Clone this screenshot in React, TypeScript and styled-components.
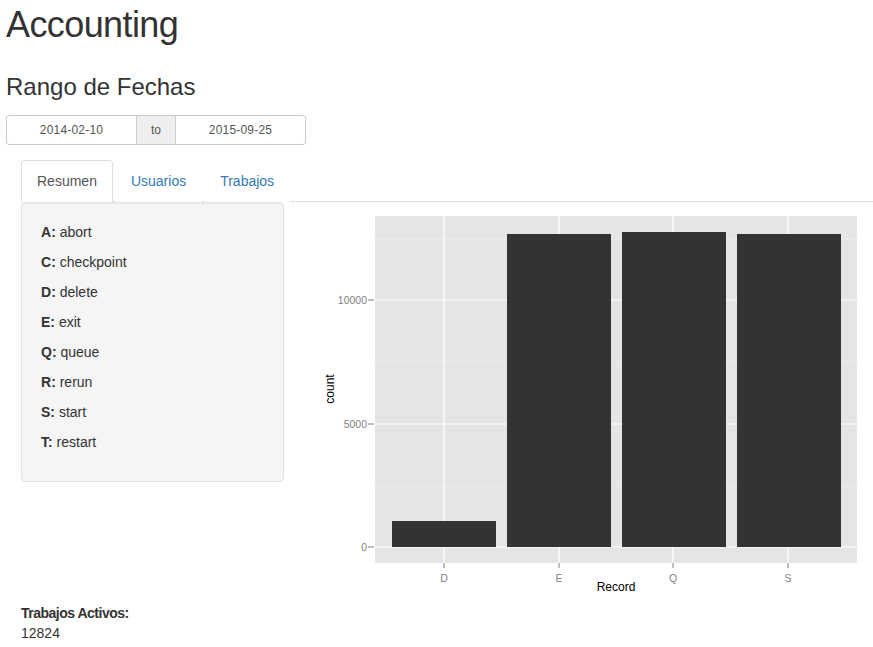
import React from "react";
import styled, { createGlobalStyle } from "styled-components";

const GlobalStyle = createGlobalStyle`
  html, body {
    margin: 0;
    padding: 0;
    background: #fff;
  }
  body {
    font-family: "Liberation Sans", Arial, sans-serif;
    font-size: 14px;
    line-height: 20px;
    color: #333;
    overflow: hidden;
  }
  * { box-sizing: border-box; }
`;

const legend = [
  ["A", "abort"],
  ["C", "checkpoint"],
  ["D", "delete"],
  ["E", "exit"],
  ["Q", "queue"],
  ["R", "rerun"],
  ["S", "start"],
  ["T", "restart"],
];

const bars = [
  { label: "D", x: 78, top: 318 },
  { label: "E", x: 193, top: 31 },
  { label: "Q", x: 308, top: 29 },
  { label: "S", x: 423, top: 31 },
];

export default function App() {
  return (
    <StyledPage>
      <GlobalStyle />
      <StyledTitle>Accounting</StyledTitle>
      <StyledSubtitle>Rango de Fechas</StyledSubtitle>
      <StyledDateRange>
        <StyledDateInput defaultValue="2014-02-10" />
        <StyledAddon>to</StyledAddon>
        <StyledDateInput defaultValue="2015-09-25" />
      </StyledDateRange>

      <StyledTabset>
        <StyledTabs>
          <StyledTab $active>Resumen</StyledTab>
          <StyledTab>Usuarios</StyledTab>
          <StyledTab>Trabajos</StyledTab>
        </StyledTabs>
        <StyledTabContent>
          <StyledWell>
            {legend.map(([k, v]) => (
              <p key={k}>
                <strong>{k}:</strong> {v}
              </p>
            ))}
          </StyledWell>
          <StyledPlot>
            <svg width="560" height="400" viewBox="0 0 560 400">
              <rect x="61" y="13" width="482" height="347" fill="#e5e5e5" />
              {[36, 159, 283].map((y) => (
                <line key={y} x1="61" x2="543" y1={y} y2={y} stroke="#f2f2f2" strokeWidth="0.6" />
              ))}
              {[97, 221, 344].map((y) => (
                <line key={y} x1="61" x2="543" y1={y} y2={y} stroke="#fff" strokeWidth="1.2" />
              ))}
              {[130, 245, 359, 474].map((x) => (
                <line key={x} x1={x} x2={x} y1="13" y2="360" stroke="#fff" strokeWidth="1.2" />
              ))}
              {bars.map((b) => (
                <rect key={b.label} x={b.x} y={b.top} width="104" height={344 - b.top} fill="#333" />
              ))}
              {[
                [97, "10000"],
                [221, "5000"],
                [344, "0"],
              ].map(([y, t]) => (
                <g key={t as string}>
                  <line x1="54" x2="60" y1={y} y2={y} stroke="#7f7f7f" />
                  <text x="53" y={(y as number) + 4} textAnchor="end" fontSize="10.5" fill="#7f7f7f" fontFamily="Liberation Sans, sans-serif">
                    {t}
                  </text>
                </g>
              ))}
              {[130, 245, 359, 474].map((x, i) => (
                <g key={x}>
                  <line x1={x} x2={x} y1="360" y2="365" stroke="#7f7f7f" />
                  <text x={x} y="379" textAnchor="middle" fontSize="10.5" fill="#7f7f7f" fontFamily="Liberation Sans, sans-serif">
                    {bars[i].label}
                  </text>
                </g>
              ))}
              <text x="302" y="388" textAnchor="middle" fontSize="12" fill="#000" fontFamily="Liberation Sans, sans-serif">
                Record
              </text>
              <text
                x="0"
                y="0"
                transform="translate(20 186) rotate(-90)"
                textAnchor="middle"
                fontSize="12"
                fill="#000"
                fontFamily="Liberation Sans, sans-serif"
              >
                count
              </text>
            </svg>
          </StyledPlot>
        </StyledTabContent>
      </StyledTabset>

      <StyledSummary>
        <label>Trabajos Activos:</label>
        <div>12824</div>
      </StyledSummary>
    </StyledPage>
  );
}

const StyledPage = styled.main`
  padding: 5px 0 0 6px;
`;

const StyledTitle = styled.h1`
  margin: 0;
  font-size: 36px;
  line-height: 40px;
  font-weight: 500;
  letter-spacing: -0.6px;
`;

const StyledSubtitle = styled.h3`
  margin: 29px 0 15px;
  font-size: 24px;
  line-height: 26px;
  font-weight: 500;
`;

const StyledDateRange = styled.div`
  display: flex;
  width: 300px;
  height: 30px;
`;

const StyledDateInput = styled.input`
  width: 131px;
  height: 30px;
  border: 1px solid #ccc;
  text-align: center;
  font-family: "Liberation Sans", Arial, sans-serif;
  font-size: 12px;
  letter-spacing: 0.2px;
  color: #555;
  padding: 0;
  outline: none;
  background: #fff;

  &:first-child {
    border-radius: 3px 0 0 3px;
  }
  &:last-child {
    border-radius: 0 3px 3px 0;
  }
`;

const StyledAddon = styled.span`
  width: 38px;
  display: flex;
  align-items: center;
  justify-content: center;
  background: #eee;
  border-top: 1px solid #ccc;
  border-bottom: 1px solid #ccc;
  font-size: 12px;
  color: #555;
`;

const StyledTabset = styled.section`
  margin-top: 15px;
  padding-left: 15px;
`;

const StyledTabs = styled.ul`
  display: flex;
  list-style: none;
  margin: 0;
  padding: 0;
  border-bottom: 1px solid #ddd;
`;

const StyledTab = styled.li<{ $active?: boolean }>`
  margin: 0 2px -1px 0;
  padding: 10px 15px;
  line-height: 20px;
  border: 1px solid ${(p) => (p.$active ? "#ddd" : "transparent")};
  border-bottom-color: ${(p) => (p.$active ? "#fff" : "transparent")};
  border-radius: 4px 4px 0 0;
  background: #fff;
  color: ${(p) => (p.$active ? "#555" : "#337ab7")};
  cursor: pointer;
`;

const StyledTabContent = styled.div`
  display: grid;
  grid-template-columns: 263px 1fr;
  column-gap: 30px;
`;

const StyledWell = styled.div`
  align-self: start;
  padding: 19px 19px 19px;
  background: #f5f5f5;
  border: 1px solid #e3e3e3;
  border-radius: 4px;
  box-shadow: inset 0 1px 1px rgba(0, 0, 0, 0.05);

  p {
    margin: 0 0 10px;
  }
  strong {
    font-weight: bold;
  }
`;

const StyledPlot = styled.div`
  padding-top: 1px;
  height: 401px;

  svg {
    display: block;
  }
`;

const StyledSummary = styled.div`
  padding-left: 15px;

  label {
    display: block;
    font-weight: bold;
    font-size: 14px;
    letter-spacing: -0.5px;
  }
  div {
    line-height: 21px;
  }
`;
